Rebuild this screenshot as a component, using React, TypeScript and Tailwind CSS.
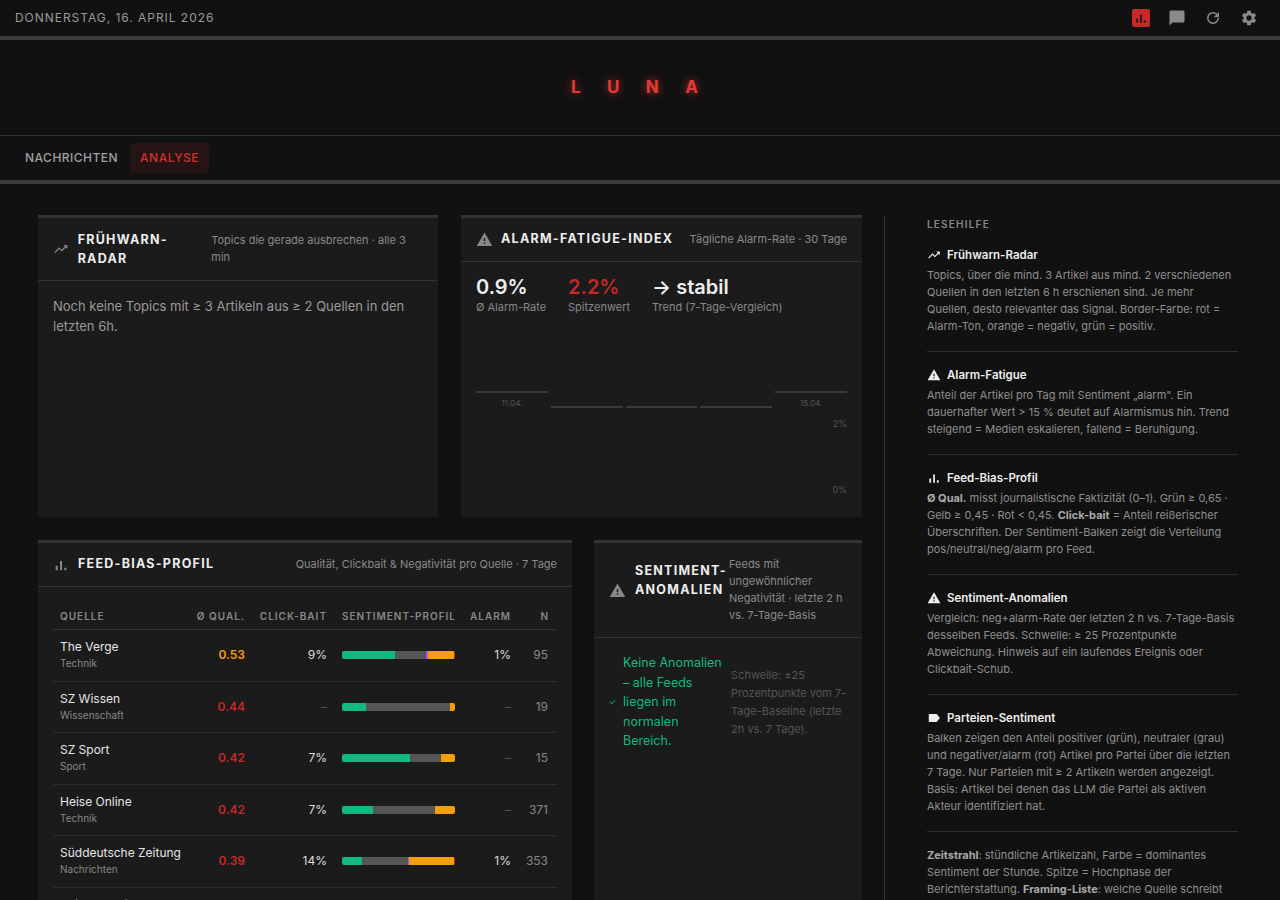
import React from "react"

const TrendIcon = ({ className = "" }: { className?: string }) => (
  <svg viewBox="0 0 24 24" className={className} fill="currentColor">
    <path d="M16 6l2.29 2.29-4.88 4.88-4-4L2 16.59 3.41 18l6-6 4 4 6.3-6.29L22 12V6z" />
  </svg>
)
const WarnIcon = ({ className = "" }: { className?: string }) => (
  <svg viewBox="0 0 24 24" className={className} fill="currentColor">
    <path d="M1 21h22L12 2 1 21zm12-3h-2v-2h2v2zm0-4h-2v-4h2v4z" />
  </svg>
)
const BarsIcon = ({ className = "" }: { className?: string }) => (
  <svg viewBox="0 0 24 24" className={className} fill="currentColor">
    <path d="M4 13h3v7H4zM10.5 6h3v14h-3zM17 16h3v4h-3z" />
  </svg>
)
const LabelIcon = ({ className = "" }: { className?: string }) => (
  <svg viewBox="0 0 24 24" className={className} fill="currentColor">
    <path d="M17.63 5.84C17.27 5.33 16.67 5 16 5L5 5.01C3.9 5.01 3 5.9 3 7v10c0 1.1.9 1.99 2 1.99L16 19c.67 0 1.27-.33 1.63-.84L22 12l-4.37-6.16z" />
  </svg>
)

const rows = [
  { name: "The Verge", cat: "Technik", q: "0.53", qc: "text-[#f59e0b]", cb: "9%", bars: [47, 27, 2, 23, 1], al: "1%", n: "95" },
  { name: "SZ Wissen", cat: "Wissenschaft", q: "0.44", qc: "text-[#c62828]", cb: "–", bars: [21, 75, 0, 4, 0], al: "–", n: "19" },
  { name: "SZ Sport", cat: "Sport", q: "0.42", qc: "text-[#c62828]", cb: "7%", bars: [60, 28, 0, 12, 0], al: "–", n: "15" },
  { name: "Heise Online", cat: "Technik", q: "0.42", qc: "text-[#c62828]", cb: "7%", bars: [27, 55, 0, 18, 0], al: "–", n: "371" },
  { name: "Süddeutsche Zeitung", cat: "Nachrichten", q: "0.39", qc: "text-[#c62828]", cb: "14%", bars: [18, 40, 1, 40, 1], al: "1%", n: "353" },
  { name: "Spiegel Online", cat: "Nachrichten", q: "0.38", qc: "text-[#c62828]", cb: "10%", bars: [20, 45, 0, 35, 0], al: "–", n: "210" },
]
const barColors = ["bg-[#10b981]", "bg-[#555555]", "bg-[#a855f7]", "bg-[#f59e0b]", "bg-[#c62828]"]

const helps = [
  { icon: <TrendIcon className="h-3.5 w-3.5" />, title: "Frühwarn-Radar", body: <>Topics, über die mind. 3 Artikel aus mind. 2 verschiedenen Quellen in den letzten 6 h erschienen sind. Je mehr Quellen, desto relevanter das Signal. Border-Farbe: rot = Alarm-Ton, orange = negativ, grün = positiv.</> },
  { icon: <WarnIcon className="h-3.5 w-3.5" />, title: "Alarm-Fatigue", body: <>Anteil der Artikel pro Tag mit Sentiment „alarm". Ein dauerhafter Wert &gt; 15 % deutet auf Alarmismus hin. Trend steigend = Medien eskalieren, fallend = Beruhigung.</> },
  { icon: <BarsIcon className="h-3.5 w-3.5" />, title: "Feed-Bias-Profil", body: <><b className="text-[#aaa]">Ø Qual.</b> misst journalistische Faktizität (0–1). Grün ≥ 0,65 · Gelb ≥ 0,45 · Rot &lt; 0,45. <b className="text-[#aaa]">Click-bait</b> = Anteil reißerischer Überschriften. Der Sentiment-Balken zeigt die Verteilung pos/neutral/neg/alarm pro Feed.</> },
  { icon: <WarnIcon className="h-3.5 w-3.5" />, title: "Sentiment-Anomalien", body: <>Vergleich: neg+alarm-Rate der letzten 2 h vs. 7-Tage-Basis desselben Feeds. Schwelle: ≥ 25 Prozentpunkte Abweichung. Hinweis auf ein laufendes Ereignis oder Clickbait-Schub.</> },
  { icon: <LabelIcon className="h-3.5 w-3.5" />, title: "Parteien-Sentiment", body: <>Balken zeigen den Anteil positiver (grün), neutraler (grau) und negativer/alarm (rot) Artikel pro Partei über die letzten 7 Tage. Nur Parteien mit ≥ 2 Artikeln werden angezeigt. Basis: Artikel bei denen das LLM die Partei als aktiven Akteur identifiziert hat.</> },
]

export default function App() {
  return (
    <div className="h-[900px] overflow-hidden bg-[#111111] text-[#ddd]" style={{ fontFamily: "Inter, 'Liberation Sans', sans-serif" }}>
      {/* top bar */}
      <div className="box-content flex h-9 items-center justify-between border-b-4 border-[#3a3a3a] px-[15px]">
        <span className="text-[12px] tracking-[0.08em] text-[#9a9a9a]">DONNERSTAG, 16. APRIL 2026</span>
        <div className="flex items-center gap-[18px] pr-[7px] text-[#8a8a8a]">
          <span className="flex h-[18px] w-[18px] items-center justify-center rounded-[2px] bg-[#c62828] text-[#1a1a1a]">
            <BarsIcon className="h-3.5 w-3.5" />
          </span>
          <svg viewBox="0 0 24 24" className="h-[18px] w-[18px]" fill="currentColor"><path d="M20 2H4c-1.1 0-2 .9-2 2v18l4-4h14c1.1 0 2-.9 2-2V4c0-1.1-.9-2-2-2z" /></svg>
          <svg viewBox="0 0 24 24" className="h-[18px] w-[18px]" fill="currentColor"><path d="M17.65 6.35A7.96 7.96 0 0012 4a8 8 0 108 8h-2a6 6 0 11-1.76-4.24L13 11h7V4l-2.35 2.35z" /></svg>
          <svg viewBox="0 0 24 24" className="h-[18px] w-[18px]" fill="currentColor"><path d="M19.14 12.94c.04-.3.06-.61.06-.94 0-.32-.02-.64-.07-.94l2.03-1.58a.49.49 0 00.12-.61l-1.92-3.32a.488.488 0 00-.59-.22l-2.39.96c-.5-.38-1.03-.7-1.62-.94l-.36-2.540a.484.484 0 00-.48-.41h-3.84c-.24 0-.43.17-.47.41l-.36 2.54c-.59.24-1.13.57-1.62.94l-2.39-.96c-.22-.08-.47 0-.59.22L2.74 8.87c-.12.21-.08.47.12.61l2.03 1.58c-.05.3-.09.63-.09.94s.02.64.07.94l-2.03 1.58a.49.49 0 00-.12.61l1.92 3.32c.12.22.37.29.59.22l2.39-.96c.5.38 1.030.7 1.62.94l.36 2.54c.05.24.24.41.48.41h3.84c.24 0 .44-.17.47-.41l.36-2.54c.59-.24 1.13-.56 1.62-.94l2.39.96c.22.08.47 0 .59-.22l1.92-3.32c.12-.22.07-.47-.12-.61l-2.01-1.58zM12 15.6c-1.98 0-3.6-1.62-3.6-3.6s1.62-3.6 3.6-3.6 3.6 1.62 3.6 3.6-1.62 3.6-3.6 3.6z" /></svg>
        </div>
      </div>
      {/* logo */}
      <div className="flex h-[96px] items-center justify-center border-b border-[#333]">
        <span className="pl-[0.9em] text-[17px] font-bold tracking-[1.55em] text-[#e53935] [text-shadow:0_0_8px_rgba(229,57,53,0.8)]">LUNA</span>
      </div>
      {/* nav */}
      <div className="box-content flex h-[44px] items-center gap-[6px] border-b-4 border-[#3a3a3a] px-[19px]">
        <span className="px-[6px] py-[6px] text-[12px] font-medium tracking-[0.04em] text-[#a0a0a0]">NACHRICHTEN</span>
        <span className="rounded-[3px] bg-[#261414] px-[10px] py-[6px] text-[12px] font-medium tracking-[0.04em] text-[#d32f2f]">ANALYSE</span>
      </div>
      {/* main */}
      <div className="flex pt-[31px]">
        <div className="flex w-[884px] flex-col gap-[23px] pl-[38px] pr-[22px]">
          <div className="flex gap-[23px]">
            {/* Frühwarn */}
            <div className="h-[302px] w-[400px] border-t-[3px] border-[#333] bg-[#1b1b1b]">
              <div className="flex h-[63px] items-center border-b border-[#333] px-[15px]">
                <TrendIcon className="mr-[9px] h-4 w-4 text-[#888]" />
                <span className="w-[110px] text-[12.5px] font-bold leading-[19px] tracking-[0.1em] text-[#eee]">FRÜHWARN-RADAR</span>
                <span className="ml-[26px] text-[11px] leading-[17px] text-[#8a8a8a]">Topics die gerade ausbrechen · alle 3 min</span>
              </div>
              <p className="px-[15px] pt-[15px] text-[13px] leading-[20px] text-[#9a9a9a]">Noch keine Topics mit ≥ 3 Artikeln aus ≥ 2 Quellen in den letzten 6h.</p>
            </div>
            {/* Alarm */}
            <div className="h-[302px] w-[401px] border-t-[3px] border-[#333] bg-[#1b1b1b]">
              <div className="flex h-[44px] items-center justify-between border-b border-[#333] px-[15px]">
                <div className="flex items-center">
                  <WarnIcon className="mr-2 h-[17px] w-[17px] text-[#888]" />
                  <span className="text-[12.5px] font-bold tracking-[0.1em] text-[#eee]">ALARM-FATIGUE-INDEX</span>
                </div>
                <span className="text-[11px] text-[#8a8a8a]">Tägliche Alarm-Rate · 30 Tage</span>
              </div>
              <div className="flex gap-[22px] px-[15px] pt-[13px]">
                <div><div className="text-[20px] font-semibold leading-[24px] text-[#eee]">0.9%</div><div className="text-[11px] text-[#888]">Ø Alarm-Rate</div></div>
                <div><div className="text-[20px] font-semibold leading-[24px] text-[#c62828]">2.2%</div><div className="text-[11px] text-[#888]">Spitzenwert</div></div>
                <div><div className="text-[20px] font-semibold leading-[24px] text-[#eee]">→ stabil</div><div className="text-[11px] text-[#888]">Trend (7-Tage-Vergleich)</div></div>
              </div>
              <div className="mt-[75px] flex gap-[3px] px-[15px]">
                {[0, 1, 2, 3, 4].map((i) => {
                  const hi = i === 0 || i === 4
                  return (
                    <div key={i} className="flex-1">
                      <div className={`h-[2px] bg-[#3a3a3a] ${hi ? "" : "mt-[15px]"}`} />
                      {hi && <div className="mt-[4px] text-center text-[8px] text-[#555]">{i === 0 ? "11.04." : "15.04."}</div>}
                    </div>
                  )
                })}
              </div>
              <div className="flex flex-col items-end px-[15px] text-[9px] text-[#555]">
                <span className="mt-[8px]">2%</span>
                <span className="mt-[53px]">0%</span>
              </div>
            </div>
          </div>
          <div className="flex gap-[22px]">
            {/* Feed-Bias */}
            <div className="h-[400px] w-[534px] border-t-[3px] border-[#333] bg-[#1b1b1b]">
              <div className="flex h-[44px] items-center justify-between border-b border-[#333] px-[15px]">
                <div className="flex items-center">
                  <BarsIcon className="mr-[9px] h-4 w-4 text-[#888]" />
                  <span className="text-[12.5px] font-bold tracking-[0.1em] text-[#eee]">FEED-BIAS-PROFIL</span>
                </div>
                <span className="text-[11px] text-[#8a8a8a]">Qualität, Clickbait &amp; Negativität pro Quelle · 7 Tage</span>
              </div>
              <div className="px-[15px] pt-[16px]">
                <div className="flex h-[27px] items-center border-b border-[#333] px-[7px] text-[10px] font-semibold tracking-[0.1em] text-[#888]">
                  <span className="w-[120px]">QUELLE</span>
                  <span className="w-[65px] text-right">Ø QUAL.</span>
                  <span className="w-[82px] text-right">CLICK-BAIT</span>
                  <span className="ml-[15px] w-[125px]">SENTIMENT-PROFIL</span>
                  <span className="w-[44px] text-right">ALARM</span>
                  <span className="w-[38px] text-right">N</span>
                </div>
                {rows.map((r) => (
                  <div key={r.name} className="flex h-[51.5px] items-center border-b border-[#2c2c2c] px-[7px]">
                    <div className="w-[120px] whitespace-nowrap">
                      <div className="text-[12px] leading-[16px] text-[#e6e6e6]">{r.name}</div>
                      <div className="text-[10px] leading-[16px] text-[#888]">{r.cat}</div>
                    </div>
                    <span className={`w-[65px] text-right text-[12px] font-semibold ${r.qc}`}>{r.q}</span>
                    <span className={`w-[82px] text-right text-[12px] ${r.cb === "–" ? "text-[#555]" : "text-[#ddd]"}`}>{r.cb}</span>
                    <div className="ml-[15px] w-[125px]">
                      <div className="flex h-[8px] w-[113px] overflow-hidden rounded-[2px]">
                        {r.bars.map((b, i) => (
                          <div key={i} className={barColors[i]} style={{ width: `${b}%` }} />
                        ))}
                      </div>
                    </div>
                    <span className={`w-[44px] text-right text-[12px] ${r.al === "–" ? "text-[#555]" : "text-[#ddd]"}`}>{r.al}</span>
                    <span className="w-[38px] pr-[1px] text-right text-[12px] text-[#888]">{r.n}</span>
                  </div>
                ))}
              </div>
            </div>
            {/* Anomalien */}
            <div className="h-[400px] w-[268px] border-t-[3px] border-[#333] bg-[#1b1b1b]">
              <div className="flex h-[95px] items-center border-b border-[#333] pl-[15px] pr-[10px]">
                <WarnIcon className="mr-[9px] h-[17px] w-[17px] shrink-0 text-[#888]" />
                <span className="mb-[20px] w-[94px] shrink-0 text-[12.5px] font-bold leading-[19px] tracking-[0.1em] text-[#eee]">SENTIMENT-ANOMALIEN</span>
                <span className="text-[11px] leading-[17px] text-[#8a8a8a]">Feeds mit ungewöhnlicher Negativität · letzte 2 h vs. 7-Tage-Basis</span>
              </div>
              <div className="flex items-center pl-[15px] pr-[10px] pt-[15px]">
                <span className="mr-[7px] text-[8px] text-[#10b981]">✓</span>
                <span className="w-[104px] shrink-0 text-[12.5px] leading-[19.5px] text-[#10b981]">Keine Anomalien – alle Feeds liegen im normalen Bereich.</span>
                <span className="ml-[4px] text-[11px] leading-[18px] text-[#555]">Schwelle: ±25 Prozentpunkte vom 7-Tage-Baseline (letzte 2h vs. 7 Tage).</span>
              </div>
            </div>
          </div>
        </div>
        {/* sidebar */}
        <div className="w-[396px] border-l border-[#333] pl-[42px] pr-[42px] pt-[2px]">
          <div className="text-[10px] font-semibold tracking-[0.12em] text-[#888]">LESEHILFE</div>
          {helps.map((h) => (
            <div key={h.title} className="border-b border-[#2e2e2e] pb-[16px] pt-[15px]">
              <div className="flex items-center gap-[6px] text-[11.5px] font-semibold leading-[16px] text-[#eee]">
                {h.icon}
                {h.title}
              </div>
              <p className="mt-[4px] text-[11px] leading-[17px] text-[#8f8f8f]">{h.body}</p>
            </div>
          ))}
          <p className="pt-[15px] text-[11px] leading-[17px] text-[#8f8f8f]">
            <b className="text-[#aaa]">Zeitstrahl</b>: stündliche Artikelzahl, Farbe = dominantes Sentiment der Stunde. Spitze = Hochphase der Berichterstattung. <b className="text-[#aaa]">Framing-Liste</b>: welche Quelle schreibt wie über dasselbe Thema, sortiert nach Sentiment.
          </p>
        </div>
      </div>
    </div>
  )
}
